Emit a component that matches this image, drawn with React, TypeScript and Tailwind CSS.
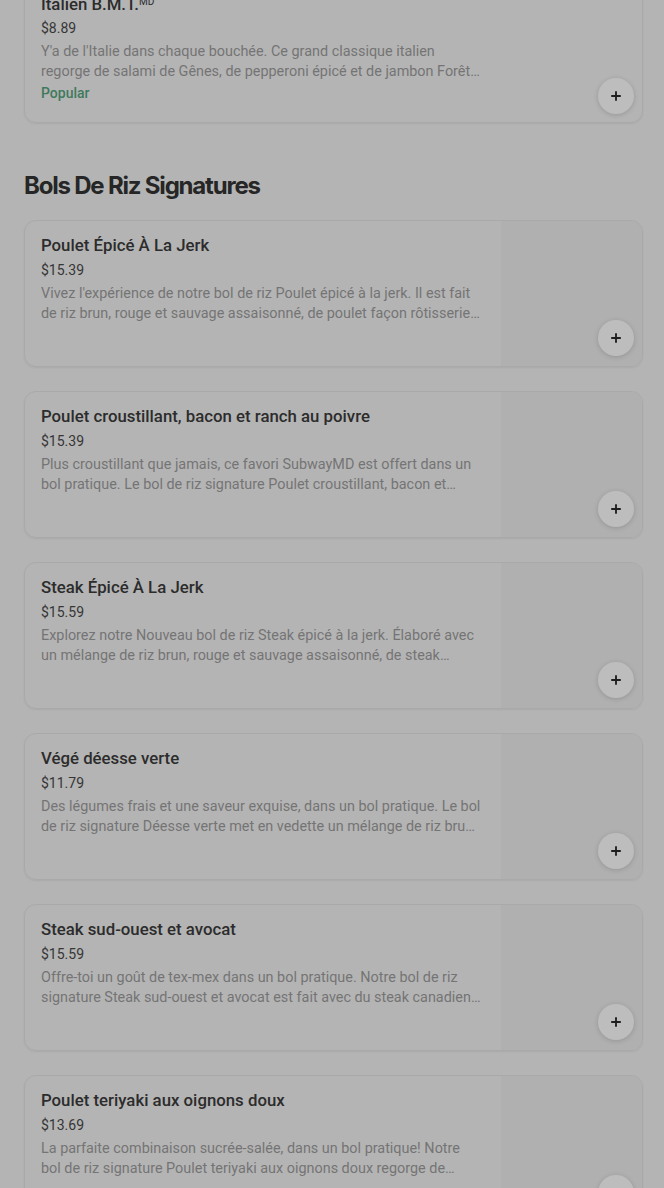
import { Plus } from 'lucide-react';

type Item = {
  nom: string;
  prix: string;
  description: string;
};

const bols: Item[] = [
  {
    nom: 'Poulet Épicé À La Jerk',
    prix: '$15.39',
    description:
      "Vivez l'expérience de notre bol de riz Poulet épicé à la jerk. Il est fait de riz brun, rouge et sauvage assaisonné, de poulet façon rôtisserie, de poivrons et d'oignons.",
  },
  {
    nom: 'Poulet croustillant, bacon et ranch au poivre',
    prix: '$15.39',
    description:
      'Plus croustillant que jamais, ce favori SubwayMD est offert dans un bol pratique. Le bol de riz signature Poulet croustillant, bacon et ranch au poivre.',
  },
  {
    nom: 'Steak Épicé À La Jerk',
    prix: '$15.59',
    description:
      'Explorez notre Nouveau bol de riz Steak épicé à la jerk. Élaboré avec un mélange de riz brun, rouge et sauvage assaisonné, de steak canadien tendre et de poivrons.',
  },
  {
    nom: 'Végé déesse verte',
    prix: '$11.79',
    description:
      'Des légumes frais et une saveur exquise, dans un bol pratique. Le bol de riz signature Déesse verte met en vedette un mélange de riz brun, rouge et sauvage.',
  },
  {
    nom: 'Steak sud-ouest et avocat',
    prix: '$15.59',
    description:
      'Offre-toi un goût de tex-mex dans un bol pratique. Notre bol de riz signature Steak sud-ouest et avocat est fait avec du steak canadien tendre.',
  },
  {
    nom: 'Poulet teriyaki aux oignons doux',
    prix: '$13.69',
    description:
      'La parfaite combinaison sucrée-salée, dans un bol pratique! Notre bol de riz signature Poulet teriyaki aux oignons doux regorge de poulet tendre.',
  },
];

function AddButton() {
  return (
    <button className="flex h-9 w-9 items-center justify-center rounded-full bg-[#bdbdbd] text-[#1e1e1e] shadow-[0_1px_5px_rgba(0,0,0,0.16)]">
      <Plus size={14} strokeWidth={3.2} />
    </button>
  );
}

function BolCard({ item }: { item: Item }) {
  return (
    <div className="flex h-[147px] overflow-hidden rounded-xl border border-[#a9a9a9] shadow-[0_1px_2px_rgba(0,0,0,0.06)]">
      <div className="flex-1 pl-4 pt-[13px]">
        <p className="text-[16.8px] font-medium leading-[22px] text-[#2c2c2c]">{item.nom}</p>
        <p className="mt-[4px] text-[14px] leading-[20px] text-[#363636]">{item.prix}</p>
        <p className="mt-1 line-clamp-2 w-[441px] text-[14.4px] leading-[20px] text-[#747474]">
          {item.description}
        </p>
      </div>
      <div className="flex w-[141px] items-end justify-end bg-[#b0b0b0] pb-[10px] pr-2">
        <AddButton />
      </div>
    </div>
  );
}

export default function App() {
  return (
    <div
      className="min-h-[1188px] overflow-hidden bg-[#b4b4b4] pl-6 pr-[21px]"
      style={{ fontFamily: 'Roboto, "Liberation Sans", sans-serif' }}
    >
      <div className="-mt-[25px] flex h-[148px] rounded-xl border border-[#a9a9a9] shadow-[0_1px_2px_rgba(0,0,0,0.06)]">
        <div className="flex-1 pl-4 pt-[17px]">
          <p className="text-[16.8px] font-medium leading-[22px] text-[#2c2c2c]">
            Italien B.M.T.<sup className="text-[10px] font-normal">MD</sup>
          </p>
          <p className="mt-[3px] text-[14px] leading-[20px] text-[#363636]">$8.89</p>
          <p className="mt-1 line-clamp-2 w-[441px] text-[14.4px] leading-[20px] text-[#747474]">
            Y'a de l'Italie dans chaque bouchée. Ce grand classique italien regorge de salami de Gênes, de pepperoni épicé et de jambon Forêt-Noire tranché finement.
          </p>
          <p className="mt-[1px] text-[14px] font-medium leading-[20px] text-[#3f7a5c]">Popular</p>
        </div>
        <div className="flex items-end pb-[8px] pr-2">
          <AddButton />
        </div>
      </div>

      <h2
        className="mt-[47px] text-[24px] font-bold leading-[32px] tracking-[-0.05em] text-[#262626]"
        style={{ fontFamily: 'Inter, "Liberation Sans", sans-serif' }}
      >
        Bols De Riz Signatures
      </h2>

      <div className="mt-[18px] flex flex-col gap-6">
        {bols.map((item) => (
          <BolCard key={item.nom} item={item} />
        ))}
      </div>
    </div>
  );
}
